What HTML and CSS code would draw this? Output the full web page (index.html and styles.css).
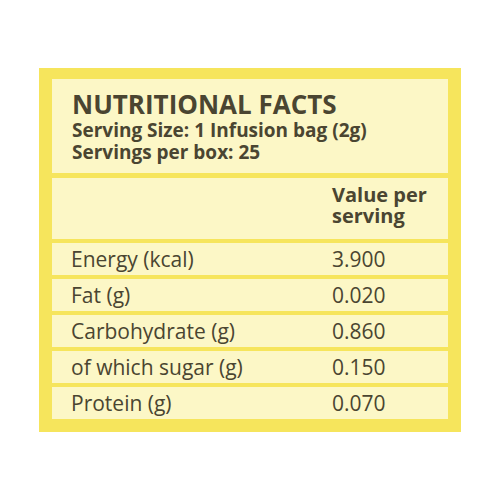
FILE: index.html
```html
<!DOCTYPE html>
<html>
<head>
<meta charset="utf-8">
<link rel="stylesheet" href="styles.css">
</head>
<body>
<div class="label">
  <div class="head">
    <div class="title">NUTRITIONAL FACTS</div>
    <div class="sub">Serving Size: 1 Infusion bag (2g)</div>
    <div class="sub">Servings per box: 25</div>
  </div>
  <div class="table">
    <div class="row colhead"><div class="c1"></div><div class="c2">Value per<br>serving</div></div>
    <div class="row"><div class="c1">Energy (kcal)</div><div class="c2">3.900</div></div>
    <div class="row"><div class="c1">Fat (g)</div><div class="c2">0.020</div></div>
    <div class="row"><div class="c1">Carbohydrate (g)</div><div class="c2">0.860</div></div>
    <div class="row"><div class="c1">of which sugar (g)</div><div class="c2">0.150</div></div>
    <div class="row"><div class="c1">Protein (g)</div><div class="c2">0.070</div></div>
  </div>
</div>
</body>
</html>
```
FILE: styles.css
```css
html, body { margin: 0; padding: 0; background: #ffffff; }
body { width: 500px; height: 500px; font-family: "Open Sans", "Noto Sans", sans-serif; color: #4a4531; }
.label {
  margin: 68px 0 0 39px;
  width: 396px;
  padding: 11px 13px 13px 13px;
  background: #f6e55c;
  display: flex;
  flex-direction: column;
  gap: 5px;
}
.head {
  background: #fcf7c6;
  height: 94px;
  box-sizing: border-box;
  padding: 10px 20px 0 20px;
}
.title { font-weight: 700; font-size: 26px; line-height: 30px; white-space: nowrap; }
.sub { font-weight: 700; font-size: 19px; line-height: 22px; white-space: nowrap; }
.table { display: flex; flex-direction: column; gap: 4px; }
.row {
  display: grid;
  grid-template-columns: 261px 1fr;
  height: 32px;
  align-items: center;
  background: #fcf7c6;
  font-size: 21px;
  white-space: nowrap;
}
.row .c1, .row .c2 { padding-left: 19px; }
.colhead { height: 61px; align-items: start; }
.colhead .c2 { font-weight: 700; font-size: 20px; line-height: 21px; padding-top: 6px; }
```
